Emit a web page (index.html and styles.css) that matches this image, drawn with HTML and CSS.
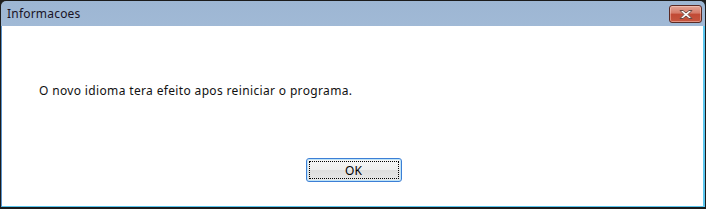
FILE: index.html
```html
<!DOCTYPE html>
<html lang="pt">
<head>
    <meta charset="UTF-8">
    <title>Informacoes</title>
    <link rel="stylesheet" href="styles.css">
</head>
<body>
    <div class="window">
        <div class="titlebar">
            <span class="title">Informacoes</span>
            <button class="close" aria-label="Fechar">
                <svg width="16" height="11" viewBox="0 0 16 11">
                    <path d="M2 1.5 L5 1.5 L8 4 L11 1.5 L14 1.5 L10 5.5 L14 9.5 L11 9.5 L8 7 L5 9.5 L2 9.5 L6 5.5 Z"
                          fill="#ffffff" stroke="#6b4a45" stroke-width="1" stroke-linejoin="round"/>
                </svg>
            </button>
        </div>
        <div class="client">
            <p class="message">O novo idioma tera efeito apos reiniciar o programa.</p>
            <div class="actions">
                <button class="ok"><span class="focus">OK</span></button>
            </div>
        </div>
    </div>
</body>
</html>
```

FILE: styles.css
```css
html, body {
    margin: 0;
    padding: 0;
}

body {
    background: #1e1e1e;
    font-family: "Noto Sans", "Open Sans", sans-serif;
    font-size: 12px;
    color: #000;
}

.window {
    width: 706px;
    height: 209px;
    box-sizing: border-box;
    border: 1px solid #1b1b1b;
    border-bottom-width: 2px;
    border-radius: 6px 6px 0 0;
    background: linear-gradient(to bottom, #9db6d3, #bad1e9);
    display: flex;
    flex-direction: column;
    overflow: hidden;
}

.titlebar {
    height: 25px;
    display: flex;
    align-items: flex-start;
    justify-content: space-between;
    padding-left: 6px;
    padding-right: 3px;
}

.title {
    margin-top: 5px;
    line-height: 16px;
    color: #1a1326;
    letter-spacing: 0.2px;
}

.close {
    margin-top: 4px;
    width: 33px;
    height: 18px;
    padding: 0;
    border: 1px solid #5a2a24;
    border-radius: 3px;
    background: linear-gradient(to bottom, #e4a596 0%, #d57a68 45%, #c14a35 50%, #c6563f 100%);
    box-shadow: inset 0 0 0 1px rgba(255, 220, 210, 0.45);
    display: flex;
    align-items: center;
    justify-content: center;
}

.client {
    flex: 1;
    background: #fff;
    border-left: 1px solid #5b93cc;
    border-right: 2px solid #5cc6ee;
    border-bottom: 1px solid #5cc6ee;
    display: flex;
    flex-direction: column;
}

.message {
    margin: 57px 0 0 37px;
    line-height: 16px;
    color: #111;
    letter-spacing: 0.35px;
}

.actions {
    display: flex;
    justify-content: center;
    margin-top: 59px;
}

.ok {
    width: 96px;
    height: 24px;
    padding: 2px;
    box-sizing: border-box;
    border: 1px solid #3c7fd6;
    border-radius: 3px;
    background: linear-gradient(to bottom, #f6f6f6 0%, #eeeeee 50%, #dedede 51%, #e8e8e8 100%);
    box-shadow: inset 0 0 0 1px #bfe3f7;
    font-family: "Noto Sans", "Open Sans", sans-serif;
    font-size: 12px;
    color: #000;
    margin-left: 2px;
}

.focus {
    display: flex;
    align-items: center;
    justify-content: center;
    height: 100%;
    border: 1px dotted #000;
    box-sizing: border-box;
}
```
